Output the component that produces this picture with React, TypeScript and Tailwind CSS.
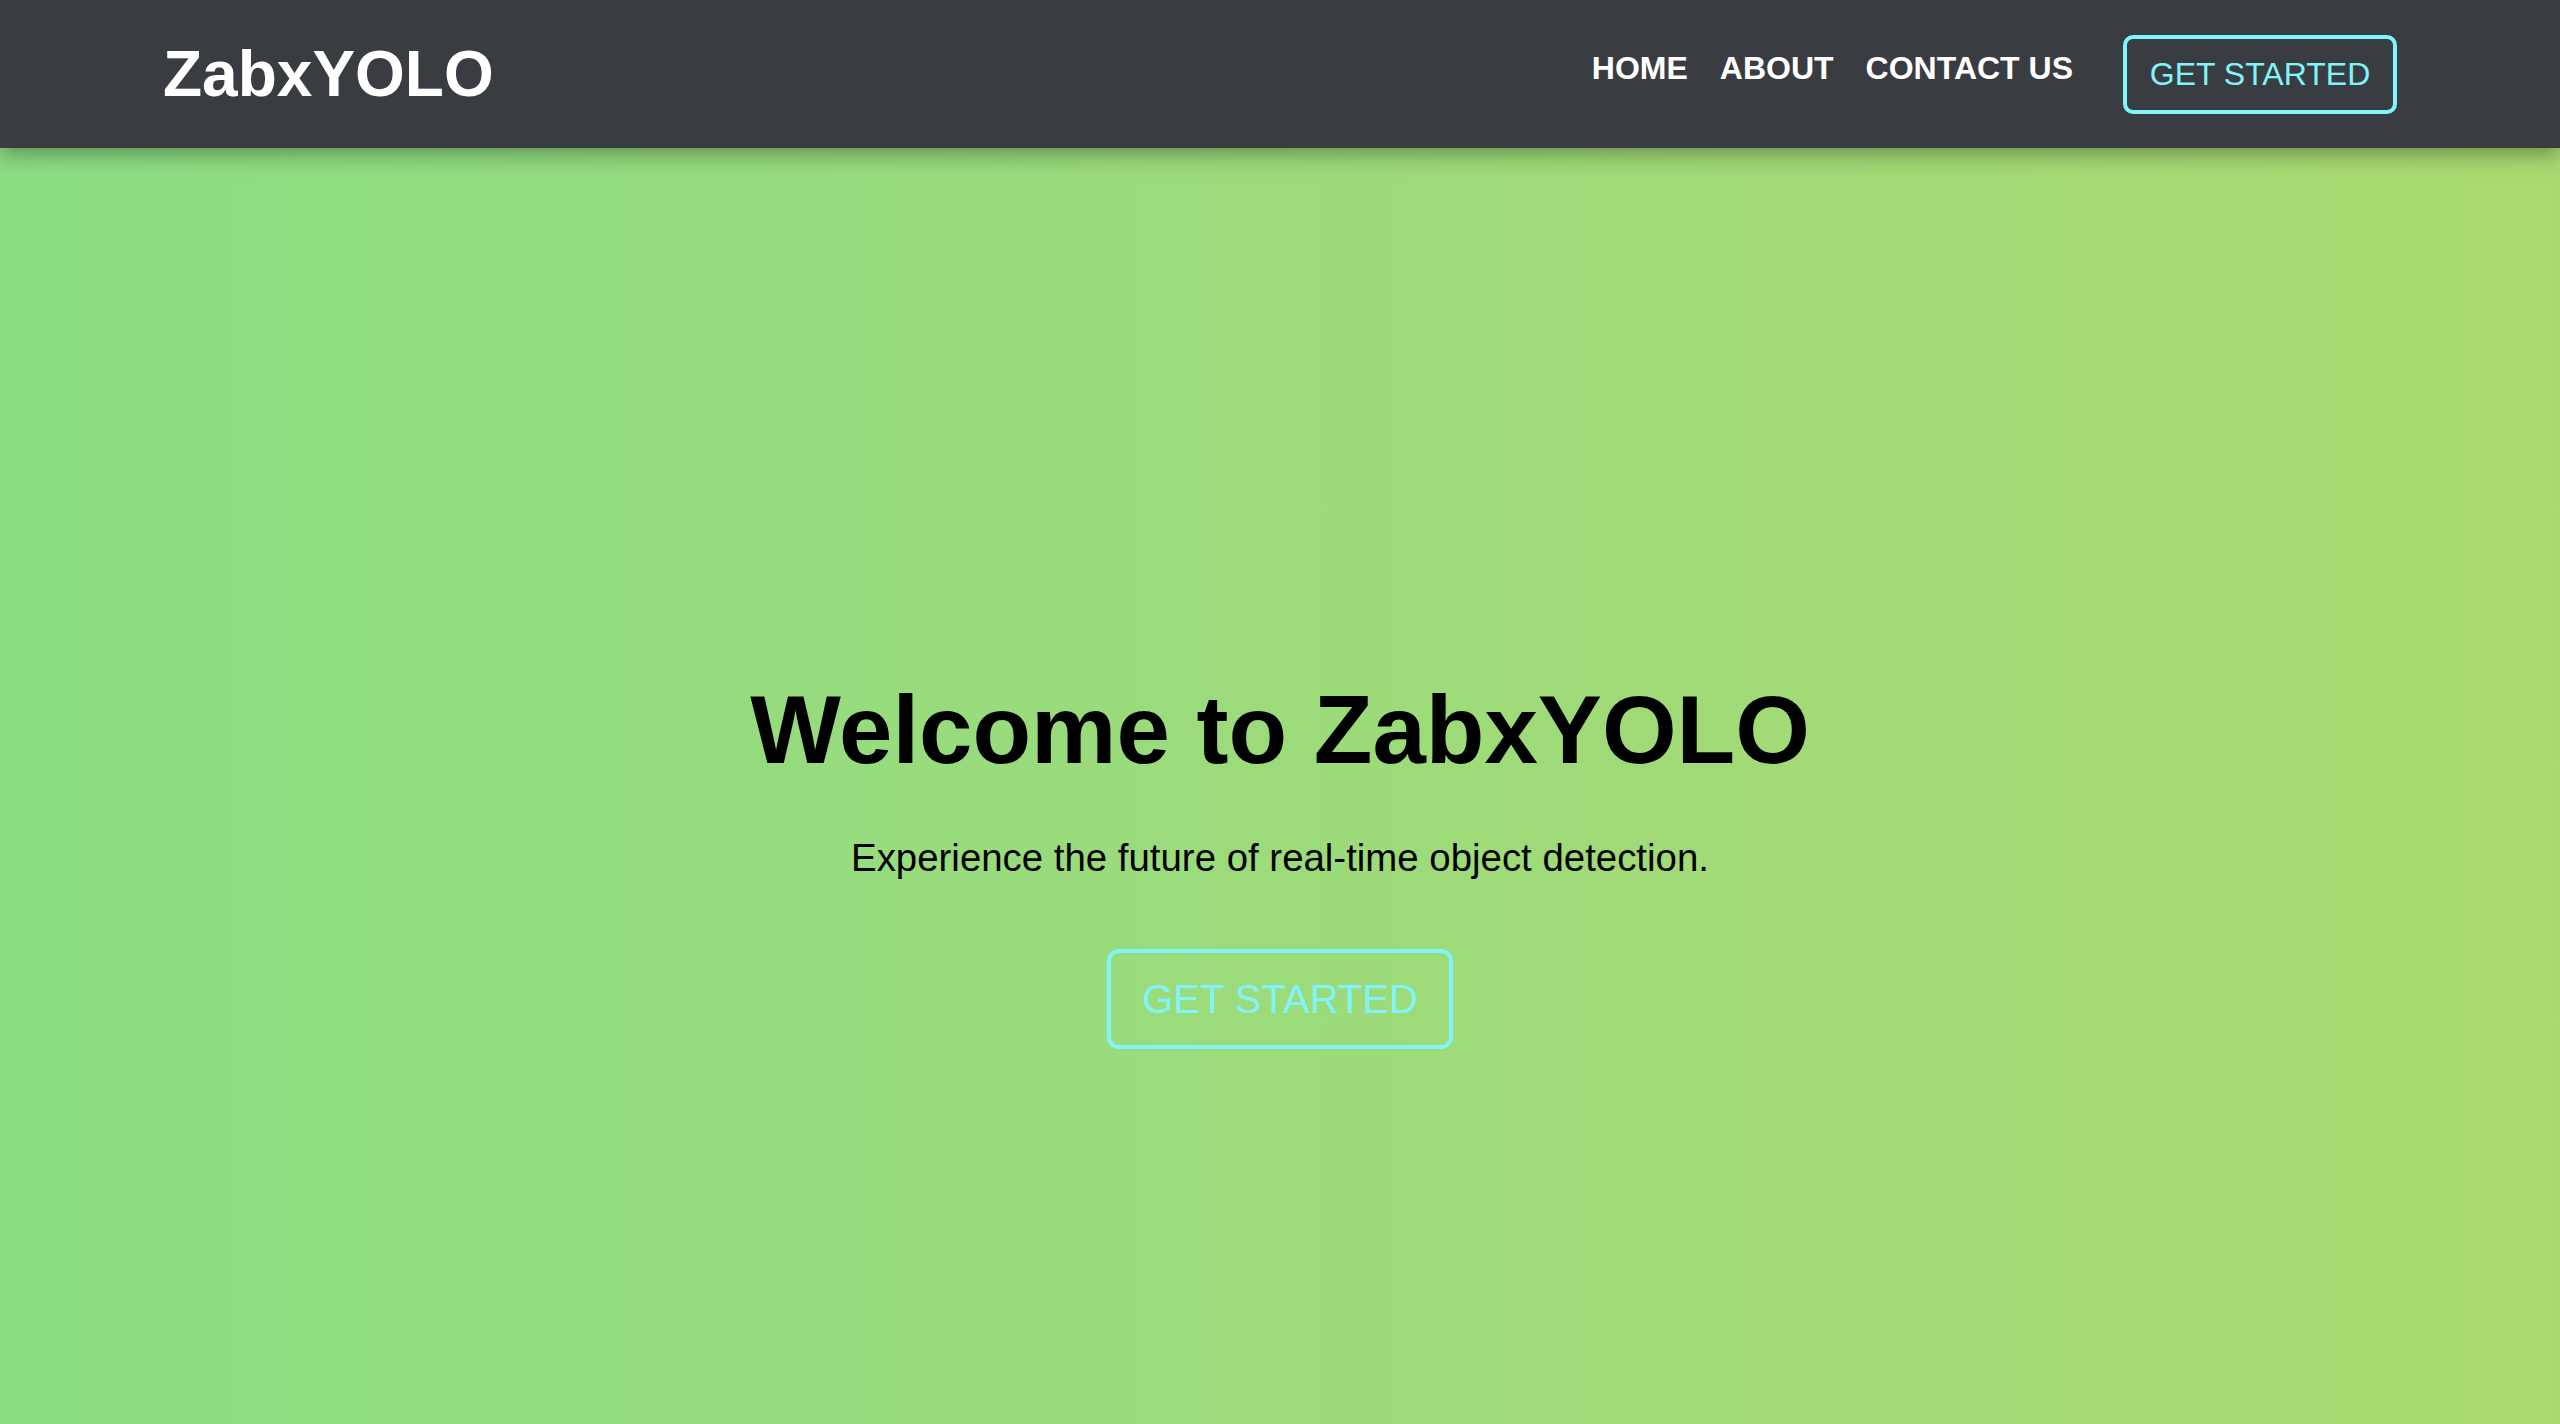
import React from "react";

export default function App() {
  return (
    <div
      className="min-h-screen w-full bg-gradient-to-r from-[#8cdd84] to-[#aad970]"
      style={{ fontFamily: '"Liberation Sans", Arial, sans-serif' }}
    >
      <header className="relative z-10 flex h-[148px] items-center justify-between bg-[#393c41] px-[163px] shadow-[0_6px_20px_rgba(0,0,0,0.35)]">
        <div className="text-[64px] font-bold leading-none text-white">ZabxYOLO</div>
        <div className="flex items-center">
          <nav className="mb-[12px] flex items-center gap-[32px] text-[32px] font-bold leading-none text-white">
            <a>HOME</a>
            <a>ABOUT</a>
            <a>CONTACT US</a>
          </nav>
          <button className="ml-[50px] flex h-[79px] w-[274px] items-center justify-center rounded-[10px] border-[4px] border-[#80f5f9] text-[32px] leading-none text-[#80f5f9]">
            GET STARTED
          </button>
        </div>
      </header>
      <section className="flex h-[1424px] flex-col items-center justify-center pt-[4px] text-center">
        <h1 className="text-[96px] font-bold leading-[110px] text-black">Welcome to ZabxYOLO</h1>
        <p className="mt-[51px] text-[38.4px] leading-[44px] text-black">
          Experience the future of real-time object detection.
        </p>
        <button className="mt-[69px] flex h-[100px] w-[346px] items-center justify-center rounded-[12px] border-[4px] border-[#80f5f9] text-[40px] leading-none text-[#80f5f9]">
          GET STARTED
        </button>
      </section>
    </div>
  );
}
